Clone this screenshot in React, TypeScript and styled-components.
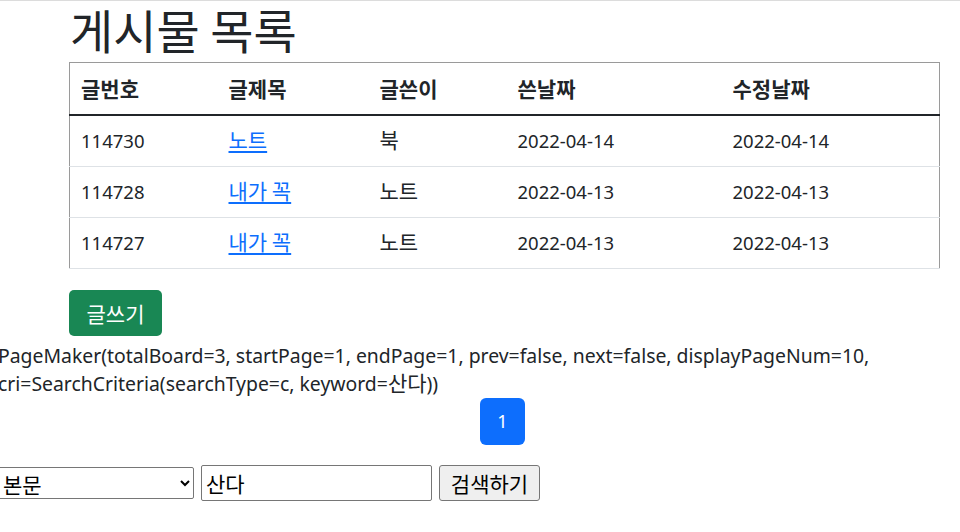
import styled, { createGlobalStyle } from "styled-components";

const GlobalStyle = createGlobalStyle`
  html, body {
    margin: 0;
    padding: 0;
    background: #ffffff;
  }
  body {
    font-family: "Noto Sans", "Noto Sans CJK KR", sans-serif;
    color: #212529;
    overflow: hidden;
    border-top: 1px solid #dcdcdc;
  }
`;

const Page = styled.div`
  width: 960px;
  height: 531px;
  display: flex;
  flex-direction: column;
`;

const Container = styled.div`
  margin-left: 69px;
  width: 871px;
`;

const Title = styled.h1`
  margin: 0;
  padding-left: 1px;
  font-family: "Noto Sans CJK KR", sans-serif;
  font-weight: 400;
  font-size: 47px;
  line-height: 55px;
  height: 61px;
  color: #212529;
`;

const Table = styled.table`
  width: 100%;
  table-layout: fixed;
  border-collapse: collapse;
  border: 1px solid #9a9a9a;
  font-size: 18px;
`;

const HeadCell = styled.th<{ $w?: number }>`
  box-sizing: border-box;
  width: ${(p) => (p.$w ? `${p.$w}px` : "auto")};
  text-align: left;
  font-family: "Noto Sans CJK KR", sans-serif;
  font-weight: 700;
  font-size: 21px;
  line-height: 27px;
  padding: 12px 11px 12px;
  border-bottom: 2px solid #212529;
`;

const Row = styled.tr`
  border-bottom: 1px solid #dee2e6;
`;

const Cell = styled.td`
  height: 51px;
  box-sizing: border-box;
  padding: 0 11px;
  line-height: 27px;
  font-size: 18.5px;
  font-family: "Noto Sans", "Noto Sans CJK KR", sans-serif;
`;

const Hangul = styled.span`
  font-family: "Noto Sans CJK KR", sans-serif;
  font-size: 21px;
  line-height: 20px;
`;

const TitleLink = styled.a`
  color: #0d6efd;
  text-decoration: underline;
  text-underline-offset: 3px;
  font-family: "Noto Sans CJK KR", sans-serif;
  font-size: 21px;
  line-height: 20px;
`;

const WriteButton = styled.button`
  margin-top: 21px;
  width: 93px;
  height: 46px;
  border: none;
  border-radius: 5px;
  background: #198754;
  color: #ffffff;
  font-family: "Noto Sans CJK KR", sans-serif;
  font-size: 21px;
  cursor: pointer;
`;

const DebugText = styled.p`
  margin: 6px 0 0 -2px;
  width: 920px;
  font-size: 19.4px;
  line-height: 28px;
  font-family: "Noto Sans", "Noto Sans CJK KR", sans-serif;
  color: #212529;
`;

const Keyword = styled.span`
  font-family: "Noto Sans CJK KR", sans-serif;
  font-size: 21px;
  line-height: 20px;
`;

const Pagination = styled.ul`
  list-style: none;
  margin: 0 0 0 480px;
  padding: 0;
  display: flex;
`;

const PageButton = styled.li<{ $active?: boolean }>`
  width: 45px;
  height: 47px;
  border-radius: 6px;
  display: flex;
  align-items: center;
  justify-content: center;
  background: ${(p) => (p.$active ? "#0d6efd" : "#ffffff")};
  color: ${(p) => (p.$active ? "#ffffff" : "#0d6efd")};
  font-size: 18px;
`;

const SearchBar = styled.form`
  margin: 20px 0 0 -4px;
  display: flex;
  align-items: center;
  gap: 7px;
`;

const Select = styled.select`
  width: 198px;
  height: 32px;
  font-family: "Noto Sans CJK KR", sans-serif;
  font-size: 21px;
  border: 1px solid #767676;
  border-radius: 2px;
  background: #ffffff;
  color: #000000;
  padding: 0 0 0 2px;
`;

const Input = styled.input`
  width: 231px;
  height: 36px;
  box-sizing: border-box;
  font-family: "Noto Sans CJK KR", sans-serif;
  font-size: 21px;
  border: 1px solid #767676;
  border-radius: 2px;
  padding: 0 4px;
  color: #000000;
`;

const SearchButton = styled.button`
  height: 36px;
  width: 101px;
  box-sizing: border-box;
  font-family: "Noto Sans CJK KR", sans-serif;
  font-size: 21px;
  background: #efefef;
  border: 1px solid #767676;
  border-radius: 3px;
  color: #000000;
  padding: 0;
`;

const columns = [
  { label: "글번호", w: 148 },
  { label: "글제목", w: 151 },
  { label: "글쓴이", w: 138 },
  { label: "쓴날짜", w: 215 },
  { label: "수정날짜" },
];

const posts = [
  { no: 114730, title: "노트", writer: "북", reg: "2022-04-14", mod: "2022-04-14" },
  { no: 114728, title: "내가 꼭", writer: "노트", reg: "2022-04-13", mod: "2022-04-13" },
  { no: 114727, title: "내가 꼭", writer: "노트", reg: "2022-04-13", mod: "2022-04-13" },
];

export default function App() {
  return (
    <Page>
      <GlobalStyle />
      <Container>
        <Title>게시물 목록</Title>
        <Table>
          <thead>
            <tr>
              {columns.map((c) => (
                <HeadCell key={c.label} $w={c.w}>
                  {c.label}
                </HeadCell>
              ))}
            </tr>
          </thead>
          <tbody>
            {posts.map((p) => (
              <Row key={p.no}>
                <Cell>{p.no}</Cell>
                <Cell>
                  <TitleLink href="#">{p.title}</TitleLink>
                </Cell>
                <Cell>
                  <Hangul>{p.writer}</Hangul>
                </Cell>
                <Cell>{p.reg}</Cell>
                <Cell>{p.mod}</Cell>
              </Row>
            ))}
          </tbody>
        </Table>
        <WriteButton type="button">글쓰기</WriteButton>
      </Container>
      <DebugText>
        PageMaker(totalBoard=3, startPage=1, endPage=1, prev=false, next=false, displayPageNum=10,
        <br />
        cri=SearchCriteria(searchType=c, keyword=<Keyword>산다</Keyword>))
      </DebugText>
      <Pagination>
        <PageButton $active>1</PageButton>
      </Pagination>
      <SearchBar onSubmit={(e) => e.preventDefault()}>
        <Select defaultValue="c">
          <option value="t">제목</option>
          <option value="c">본문</option>
          <option value="w">작성자</option>
        </Select>
        <Input defaultValue="산다" />
        <SearchButton type="submit">검색하기</SearchButton>
      </SearchBar>
    </Page>
  );
}
